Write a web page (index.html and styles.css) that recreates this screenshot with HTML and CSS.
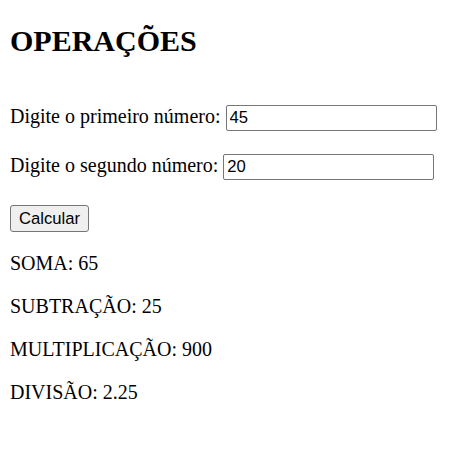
FILE: index.html
```html
<!DOCTYPE html>
<html lang="pt-BR">
<head>
<meta charset="utf-8">
<title>Operações</title>
<link rel="stylesheet" href="styles.css">
</head>
<body class="page">
<h1 class="title">OPERAÇÕES</h1>
<p class="field"><label for="n1">Digite o primeiro número:</label> <input class="num" id="n1" type="text" value="45"></p>
<p class="field"><label for="n2">Digite o segundo número:</label> <input class="num" id="n2" type="text" value="20"></p>
<button class="calc" type="button">Calcular</button>
<p class="result">SOMA: 65</p>
<p class="result">SUBTRAÇÃO: 25</p>
<p class="result">MULTIPLICAÇÃO: 900</p>
<p class="result">DIVISÃO: 2.25</p>
</body>
</html>
```

FILE: styles.css
```css
html { background: #fff; }
.page {
  margin: 0;
  padding: 10px;
  font-family: "Liberation Serif", "Times New Roman", serif;
  font-size: 20px;
  color: #000;
}
.title {
  font-size: 30px;
  font-weight: bold;
  margin: 14px 0 47px;
}
.field { margin: 20px 0; }
.result { margin: 20px 0; }
.num {
  box-sizing: border-box;
  width: 211px;
  height: 26px;
  margin: 0 0 3px;
  padding: 0 3px;
  border: 1px solid #767676;
  border-radius: 2px;
  font-family: "Liberation Sans", Arial, sans-serif;
  font-size: 16.67px;
  color: #000;
  background: #fff;
  vertical-align: baseline;
}
.calc {
  box-sizing: border-box;
  height: 27px;
  margin: 2px 0 0;
  padding: 0 8px;
  border: 1px solid #767676;
  border-radius: 3px;
  background: #efefef;
  font-family: "Liberation Sans", Arial, sans-serif;
  font-size: 16.67px;
  color: #000;
}
```
